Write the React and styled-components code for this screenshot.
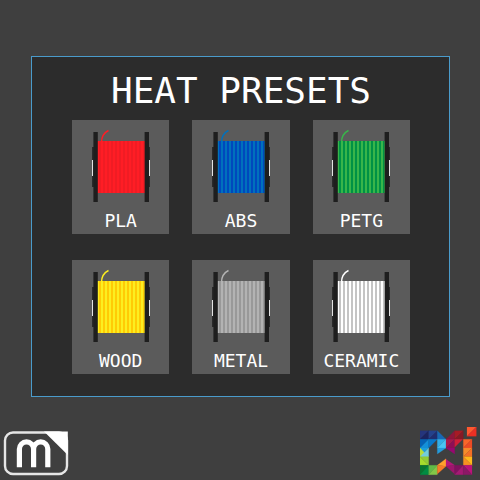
import React from "react";
import styled, { createGlobalStyle } from "styled-components";

const GlobalStyle = createGlobalStyle`
  * { box-sizing: border-box; }
  body { margin: 0; background: #3f3f3f; }
`;

const Page = styled.div`
  min-height: 100vh;
  display: flex;
  flex-direction: column;
  justify-content: space-between;
  background: #3f3f3f;
  color: #ffffff;
  font-family: "DejaVu Sans Mono", monospace;
`;

const Panel = styled.main`
  margin: 56px 30px 0 31px;
  padding: 12px 39px 22px 40px;
  border: 1px solid #4a9bcb;
  background: #2c2c2c;
`;

const Title = styled.h1`
  margin: 0 -20px 7px;
  font-size: 36px;
  line-height: 44px;
  font-weight: 400;
  text-align: center;
  white-space: nowrap;
`;

const PresetGrid = styled.div`
  display: grid;
  grid-template-columns: repeat(3, 1fr);
  gap: 26px 23px;
`;

const PresetButton = styled.button`
  display: flex;
  flex-direction: column;
  align-items: center;
  height: 114px;
  padding: 9px 0 0;
  border: 0;
  background: #5b5b5b;
  color: inherit;
  font: inherit;
  cursor: pointer;
`;

const SpoolArt = styled.svg`
  display: block;
  width: 60px;
  height: 74px;
  flex: none;
`;

const PresetName = styled.span`
  margin-top: 7px;
  font-size: 18px;
  line-height: 22px;
`;

const Footer = styled.footer`
  display: flex;
  justify-content: space-between;
  align-items: flex-end;
  padding: 0 3px 4px;
`;

const Logo = styled.svg`
  display: block;
`;

const presets = [
  { name: "PLA", light: "#ff1d25", dark: "#f01c24" },
  { name: "ABS", light: "#0071bc", dark: "#0048bd" },
  { name: "PETG", light: "#39b54a", dark: "#009245" },
  { name: "WOOD", light: "#fcee21", dark: "#ffcb05" },
  { name: "METAL", light: "#b3b3b3", dark: "#999999" },
  { name: "CERAMIC", light: "#ffffff", dark: "#c4c4c4" },
];

function Spool({ light, dark }) {
  return (
    <SpoolArt viewBox="0 0 60 74" aria-hidden="true">
      <path d="M10.5 13C10.7 7.5 13.5 3.5 17.5 1.5" fill="none" stroke={light} strokeWidth="1.4" />
      <path d="M1 18h3v40H1zM56 18h3v40h-3z" fill="#2a2a2a" />
      <path d="M1 31h1v16H1zM58 31h1v16h-1z" fill="#e2e2e2" />
      <rect x="6" y="12" width="48" height="52" fill={light} />
      {Array.from({ length: 12 }, (_, i) => (
        <rect key={i} x={8 + i * 4} y="12" width={i === 11 ? 1 : 2} height="52" fill={dark} />
      ))}
      <path d="M2.4 3h4.4v70H2.4zM53.6 3H58v70h-4.4z" fill="#1e1e1e" />
    </SpoolArt>
  );
}

function MarkLogo() {
  return (
    <Logo width="66" height="46" viewBox="0 0 66 46" role="img" aria-label="Firmware logo">
      <rect x="2" y="2.5" width="62" height="41.5" rx="8" fill="none" stroke="#e6e6e6" strokeWidth="2.4" />
      <path d="M41 1.5H64.8V25Z" fill="#ffffff" />
      <path
        d="M16.4 37.2V19a7.1 7.1 0 0 1 14.2 0V37.2M30.6 19a7.1 7.1 0 0 1 14.2 0V37.2"
        fill="none"
        stroke="#ffffff"
        strokeWidth="5.2"
      />
    </Logo>
  );
}

const facets = [
  ["0,11 26,11 0,37", "#25357c"],
  ["26,11 26,37 0,37", "#1b2460"],
  ["26,11 52,11 26,37", "#24418c"],
  ["52,11 52,37 26,37", "#1f2d70"],
  ["52,11 78,37 52,37", "#1769b6"],
  ["0,37 26,37 0,63", "#0562b5"],
  ["26,37 26,63 0,63", "#138fd9"],
  ["26,37 52,37 26,63", "#0878cb"],
  ["52,37 78,37 52,63", "#32aee8"],
  ["78,37 78,63 52,63", "#48c4f3"],
  ["52,63 78,63 52,81", "#249bdc"],
  ["0,63 26,63 0,89", "#1c9fdc"],
  ["0,63 26,89 0,89", "#b9dc39"],
  ["0,89 26,63 26,89", "#72cddb"],
  ["0,89 26,89 26,115", "#92cc36"],
  ["0,89 26,115 0,115", "#a6dc2d"],
  ["0,115 26,115 0,143", "#08752f"],
  ["26,115 26,143 0,143", "#008c42"],
  ["26,115 52,115 26,143", "#60ba46"],
  ["52,115 52,143 26,143", "#82c748"],
  ["78,95 78,118 52,115", "#ffa02d"],
  ["52,115 78,118 52,141", "#f57c28"],
  ["78,37 104,11 104,37", "#8f163a"],
  ["104,11 130,11 104,37", "#a61b25"],
  ["130,11 130,37 104,37", "#861a25"],
  ["78,37 104,37 78,63", "#a9174c"],
  ["104,37 104,63 78,63", "#8e0e55"],
  ["104,37 128,37 104,61", "#d11e38"],
  ["78,63 104,63 104,81", "#980770"],
  ["130,37 156,37 130,63", "#f9662a"],
  ["156,37 156,63 130,63", "#ed4b25"],
  ["130,63 156,63 130,89", "#f68b2b"],
  ["156,63 156,89 130,89", "#f46f26"],
  ["130,89 156,89 156,115", "#ffb81b"],
  ["130,89 156,115 130,115", "#f69022"],
  ["78,97 104,115 78,118", "#b31779"],
  ["78,118 104,115 104,141", "#9d166c"],
  ["104,115 130,115 104,143", "#81125f"],
  ["130,115 130,143 104,143", "#a51973"],
  ["130,115 156,115 156,143", "#bd127a"],
  ["130,115 156,143 130,143", "#8c1766"],
  ["141,0 169,0 141,28", "#ff5930"],
  ["169,0 169,28 141,28", "#ed3024"],
];

function FacetLogo() {
  return (
    <Logo width="57" height="49" viewBox="0 0 171 147" role="img" aria-label="Maker logo">
      {facets.map(([points, fill]) => (
        <polygon key={points} points={points} fill={fill} stroke={fill} strokeWidth="0.6" />
      ))}
    </Logo>
  );
}

export default function App() {
  return (
    <>
      <GlobalStyle />
      <Page>
        <Panel>
          <Title>HEAT PRESETS</Title>
          <PresetGrid>
            {presets.map(({ name, light, dark }) => (
              <PresetButton key={name} type="button">
                <Spool light={light} dark={dark} />
                <PresetName>{name}</PresetName>
              </PresetButton>
            ))}
          </PresetGrid>
        </Panel>
        <Footer>
          <MarkLogo />
          <FacetLogo />
        </Footer>
      </Page>
    </>
  );
}
